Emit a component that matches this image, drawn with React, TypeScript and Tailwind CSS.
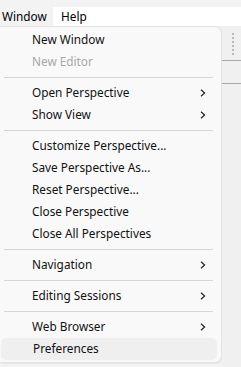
import React from "react";

type Item = { label: string; disabled?: boolean; sub?: boolean; active?: boolean } | "sep";

const items: Item[] = [
  { label: "New Window" },
  { label: "New Editor", disabled: true },
  "sep",
  { label: "Open Perspective", sub: true },
  { label: "Show View", sub: true },
  "sep",
  { label: "Customize Perspective..." },
  { label: "Save Perspective As..." },
  { label: "Reset Perspective..." },
  { label: "Close Perspective" },
  { label: "Close All Perspectives" },
  "sep",
  { label: "Navigation", sub: true },
  "sep",
  { label: "Editing Sessions", sub: true },
  "sep",
  { label: "Web Browser", sub: true },
  { label: "Preferences", active: true },
];

function Chevron() {
  return (
    <svg width="6" height="8" viewBox="0 0 6 8" className="shrink-0">
      <polyline points="1,0.8 4.6,4 1,7.2" fill="none" stroke="#222" strokeWidth="1.2" />
    </svg>
  );
}

export default function App() {
  return (
    <div
      className="w-[241px] h-[367px] bg-[#f3f3f3] overflow-hidden flex flex-col text-[11.8px] text-black"
      style={{ fontFamily: '"Noto Sans", "Open Sans", sans-serif' }}
    >
      <div className="h-[7px] shrink-0 bg-[#f3f3f3]" />
      <div className="h-[19px] shrink-0 bg-white flex items-center">
        <div className="h-full w-[53px] bg-[#f3f3f3] flex items-center pl-[2px] leading-none">Window</div>
        <div className="pl-[8px] leading-none">Help</div>
      </div>
      <div className="flex flex-1 min-h-0">
        <div className="w-[222px] h-[337px] shrink-0 bg-[#f9f9f9] border border-l-0 border-[#e3e3e3] rounded-r-[7px] pt-[2px] flex flex-col shadow-[1px_1px_2px_rgba(0,0,0,0.06)]">
          {items.map((it, i) =>
            it === "sep" ? (
              <div key={i} className="h-[9px] flex items-center pl-[4px] pr-[8px]">
                <div className="h-px w-full bg-[#d6d6d6]" />
              </div>
            ) : (
              <div
                key={i}
                className={
                  "h-[22px] flex items-center pl-[32px] pr-[15px] leading-none " +
                  (it.active ? "bg-[#efefef] rounded-[5px] ml-[1px] mr-[4px] pl-[31px] pr-[10px] " : "") +
                  (it.disabled ? "text-[#a8a8a8]" : "text-[#111]")
                }
              >
                <span className="flex-1">{it.label}</span>
                {it.sub && <Chevron />}
              </div>
            )
          )}
        </div>
        <div className="flex-1 flex flex-col bg-[#f0f0f0]">
          <div className="h-[34px] shrink-0 flex pl-[10px] pt-[7px]">
            <div className="w-[2px] h-[22px] border-l-2 border-dotted border-[#b8b8b8]" />
          </div>
          <div className="h-px bg-[#a8a8a8]" />
          <div className="h-[22px] shrink-0" />
          <div className="h-px bg-[#a8a8a8]" />
        </div>
      </div>
    </div>
  );
}
